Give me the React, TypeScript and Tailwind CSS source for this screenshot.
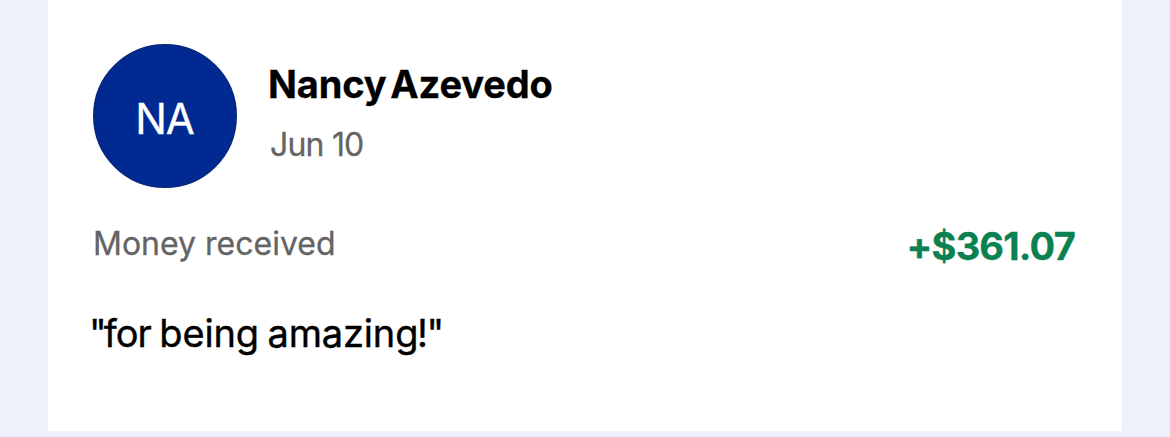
export default function App() {
  return (
    <main className="h-[437px] overflow-hidden bg-[#edf1fc] pl-12 pr-[48px] font-['Inter','Liberation_Sans',sans-serif]">
      <article className="flex h-[431px] flex-col bg-white pl-[45px] pr-[47px] pt-11">
        <header className="flex h-36 gap-[31px]">
          <div className="flex size-36 shrink-0 items-center justify-center rounded-full border-2 border-[#062882] bg-[#002991] pr-[1px] pt-[4px] text-[42px] tracking-[-1px] text-white [-webkit-text-stroke:0.3px_white]">
            <span>NA</span>
          </div>
          <div className="flex flex-col pt-[16px]">
            <h1 className="whitespace-nowrap text-[38px] font-bold leading-[48px] tracking-[-0.15px] text-black [-webkit-text-stroke:0.3px_black] [word-spacing:-5px]">Nancy Azevedo</h1>
            <time className="mt-[17px] whitespace-nowrap pl-[2px] text-[32px] leading-[40px] tracking-[-0.8px] text-[#646464] [-webkit-text-stroke:0.3px_#646464]">Jun 10</time>
          </div>
        </header>
        <div className="mt-[36px] flex h-[44px] justify-between">
          <span className="whitespace-nowrap text-[32px] leading-[40px] text-[#646464] [-webkit-text-stroke:0.3px_#646464]">Money received</span>
          <span className="whitespace-nowrap text-[38px] font-bold leading-[44px] tracking-[-0.8px] text-[#0b8152] [-webkit-text-stroke:0.3px_#0b8152]">+$361.07</span>
        </div>
        <p className="-ml-[4px] mt-[41px] whitespace-nowrap text-[38px] leading-[48px] tracking-[-0.15px] text-black [-webkit-text-stroke:0.4px_black] [word-spacing:-2px]">
          <span className="tracking-[-3px]">"</span>
          <span className="tracking-[-1px]">for</span> being amazin<span className="tracking-[-1.5px]">g!"</span>
        </p>
      </article>
    </main>
  );
}
